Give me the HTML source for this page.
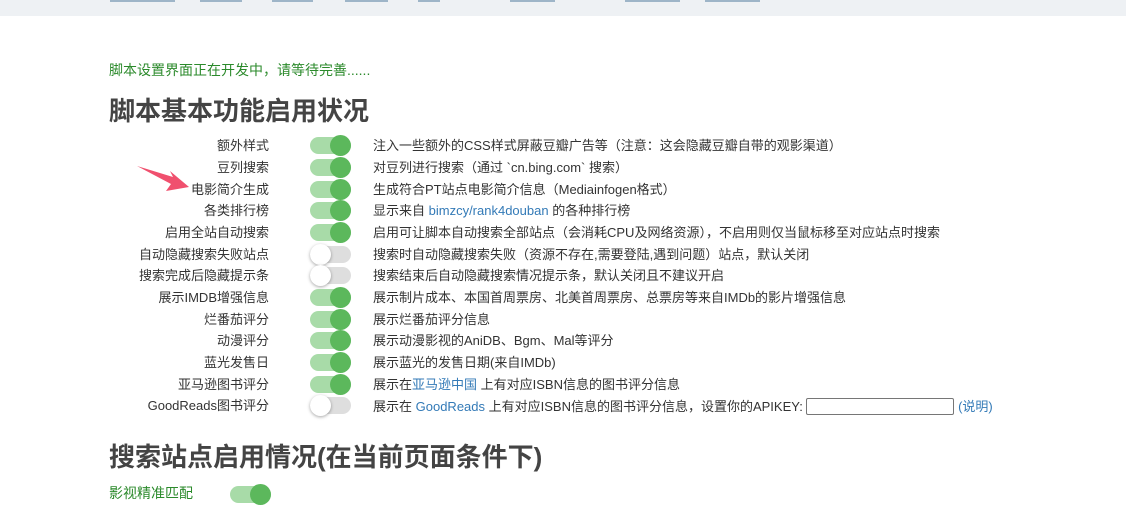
<!DOCTYPE html>
<html><head><meta charset="utf-8"><style>
body{margin:0;width:1126px;height:498px;overflow:hidden;background:#fff;font-family:"Liberation Sans","Noto Sans CJK SC",sans-serif;color:#333;font-size:13px;position:relative}
.nav{position:absolute;left:0;top:0;width:1126px;height:16px;background:#eef1f4}
.nav i{position:absolute;top:0;height:2px;background:#3b6d93;opacity:.45}
.a{position:absolute;white-space:nowrap}
.lbl{position:absolute;right:857px;white-space:nowrap;line-height:16px}
.dsc{position:absolute;left:373px;white-space:nowrap;line-height:16px}
.tg{position:absolute;left:310px;width:41px;height:17px;border-radius:9px;background:#a8dba8}
.tg b{position:absolute;right:0;top:-2px;width:21px;height:21px;border-radius:50%;background:#5cb85c}
.tg.off{background:#dedede}
.tg.off b{left:0;right:auto;background:#fff;box-shadow:0 1px 3px rgba(0,0,0,.35)}
a{color:#337ab7;text-decoration:none}
h1{position:absolute;margin:0;font-size:26px;font-weight:bold;color:#444;left:109px;white-space:nowrap}
</style></head><body>
<div class="nav"><i style="left:110px;width:65px"></i><i style="left:200px;width:42px"></i><i style="left:272px;width:41px"></i><i style="left:345px;width:43px"></i><i style="left:418px;width:22px"></i><i style="left:510px;width:45px"></i><i style="left:625px;width:55px"></i><i style="left:705px;width:55px"></i></div>
<div class="a" style="left:109px;top:60px;font-size:14px;color:#2b8a2b">脚本设置界面正在开发中，请等待完善......</div>
<h1 style="top:91px">脚本基本功能启用状况</h1>

<div class="lbl" style="top:138px">额外样式</div><div class="tg" style="top:137px"><b></b></div><div class="dsc" style="top:138px">注入一些额外的CSS样式屏蔽豆瓣广告等（注意：这会隐藏豆瓣自带的观影渠道）</div>
<div class="lbl" style="top:160px">豆列搜索</div><div class="tg" style="top:159px"><b></b></div><div class="dsc" style="top:160px">对豆列进行搜索（通过 `cn.bing.com` 搜索）</div>
<div class="lbl" style="top:182px">电影简介生成</div><div class="tg" style="top:181px"><b></b></div><div class="dsc" style="top:182px">生成符合PT站点电影简介信息（Mediainfogen格式）</div>
<div class="lbl" style="top:203px">各类排行榜</div><div class="tg" style="top:202px"><b></b></div><div class="dsc" style="top:203px">显示来自 <a>bimzcy/rank4douban</a> 的各种排行榜</div>
<div class="lbl" style="top:225px">启用全站自动搜索</div><div class="tg" style="top:224px"><b></b></div><div class="dsc" style="top:225px">启用可让脚本自动搜索全部站点（会消耗CPU及网络资源），不启用则仅当鼠标移至对应站点时搜索</div>
<div class="lbl" style="top:247px">自动隐藏搜索失败站点</div><div class="tg off" style="top:246px"><b></b></div><div class="dsc" style="top:247px">搜索时自动隐藏搜索失败（资源不存在,需要登陆,遇到问题）站点，默认关闭</div>
<div class="lbl" style="top:268px">搜索完成后隐藏提示条</div><div class="tg off" style="top:267px"><b></b></div><div class="dsc" style="top:268px">搜索结束后自动隐藏搜索情况提示条，默认关闭且不建议开启</div>
<div class="lbl" style="top:290px">展示IMDB增强信息</div><div class="tg" style="top:289px"><b></b></div><div class="dsc" style="top:290px">展示制片成本、本国首周票房、北美首周票房、总票房等来自IMDb的影片增强信息</div>
<div class="lbl" style="top:312px">烂番茄评分</div><div class="tg" style="top:311px"><b></b></div><div class="dsc" style="top:312px">展示烂番茄评分信息</div>
<div class="lbl" style="top:333px">动漫评分</div><div class="tg" style="top:332px"><b></b></div><div class="dsc" style="top:333px">展示动漫影视的AniDB、Bgm、Mal等评分</div>
<div class="lbl" style="top:355px">蓝光发售日</div><div class="tg" style="top:354px"><b></b></div><div class="dsc" style="top:355px">展示蓝光的发售日期(来自IMDb)</div>
<div class="lbl" style="top:377px">亚马逊图书评分</div><div class="tg" style="top:376px"><b></b></div><div class="dsc" style="top:377px">展示在<a>亚马逊中国</a> 上有对应ISBN信息的图书评分信息</div>
<div class="lbl" style="top:398px">GoodReads图书评分</div><div class="tg off" style="top:397px"><b></b></div><div class="dsc" style="top:398px">展示在 <a>GoodReads</a> 上有对应ISBN信息的图书评分信息，设置你的APIKEY: <span style="display:inline-block;width:146px;height:15px;border:1px solid #767676;vertical-align:-4px;border-radius:2px"></span> <a>(说明)</a></div>

<svg style="position:absolute;left:135px;top:162px" width="56" height="30"><polygon points="2,4 38,15 35,9 54,25 31,29 36,22" fill="#f0506e"/></svg>

<h1 style="top:437px">搜索站点启用情况(在当前页面条件下)</h1>
<div class="a" style="left:109px;top:483px;font-size:14px;color:#2b8a2b">影视精准匹配</div>
<div class="tg" style="left:230px;top:486px"><b></b></div>
</body></html>
